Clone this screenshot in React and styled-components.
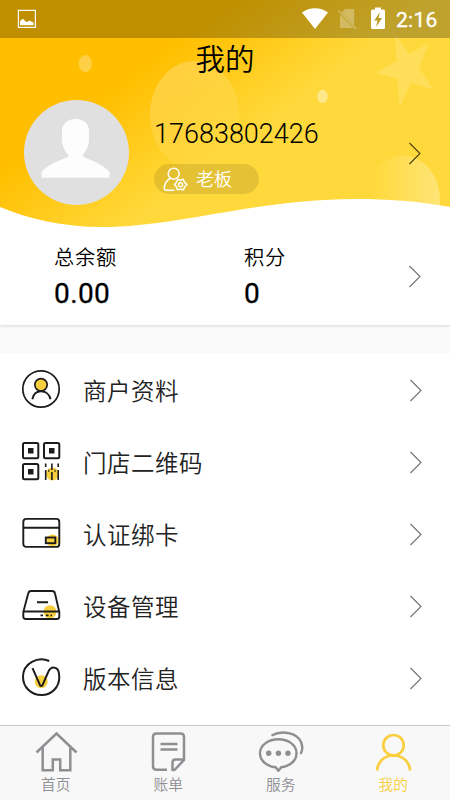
import React from 'react';
import styled, { createGlobalStyle } from 'styled-components';

const GlobalStyle = createGlobalStyle`
  * {
    box-sizing: border-box;
  }

  body {
    margin: 0;
    background: #fafafa;
    font-family: Roboto, 'Noto Sans CJK SC', sans-serif;
    font-weight: 350;
    color: #000;
  }
`;

const Page = styled.div`
  display: flex;
  flex-direction: column;
  width: 100%;
  height: 800px;
  overflow: hidden;
`;

const Header = styled.header`
  position: relative;
  z-index: 1;
  display: flex;
  flex-direction: column;
  height: 232px;
  background: #fff;
`;

/* Sits behind the status bar, title and profile */
const Backdrop = styled.svg`
  position: absolute;
  top: 0;
  left: 0;
`;

const StatusBar = styled.div`
  position: relative;
  display: flex;
  align-items: center;
  justify-content: space-between;
  height: 38px;
  padding: 0 12px 0 17px;
  background: rgba(0, 0, 0, 0.25);
`;

const StatusIcons = styled.div`
  display: flex;
  align-items: center;
`;

const Clock = styled.span`
  width: 42px;
  margin-left: 11px;
  padding-top: 2px;
  color: #fff;
  font-size: 21px;
  font-weight: 400;
  line-height: 24px;
  letter-spacing: 0.3px;
  white-space: nowrap;
  -webkit-text-stroke: 0.3px #fff;
`;

const Title = styled.h1`
  position: relative;
  margin: 0;
  height: 42px;
  padding-top: 2px;
  font-size: 29.5px;
  font-weight: 350;
  line-height: 41px;
  text-align: center;
`;

const Profile = styled.div`
  position: relative;
  display: flex;
  align-items: center;
  height: 105px;
  margin-top: 20px;
  padding: 0 29px 0 24px;
`;

const ProfileInfo = styled.div`
  display: flex;
  flex: 1;
  flex-direction: column;
  align-items: flex-start;
  gap: 14px;
  margin-left: 25px;
  padding-top: 7px;
`;

const Phone = styled.span`
  font-size: 27px;
  font-weight: 350;
  line-height: 32px;
`;

const Role = styled.div`
  display: flex;
  align-items: center;
  gap: 8px;
  width: 105px;
  height: 30px;
  padding: 2px 0 0 9px;
  border-radius: 15px;
  background: rgba(0, 0, 0, 0.1);
  color: #fff;
  font-size: 18px;
  font-weight: 350;
  line-height: 28px;
`;

const Stats = styled.section`
  position: relative;
  display: flex;
  align-items: center;
  height: 93px;
  padding: 0 29px 5px 54px;
  background: #fff;
  box-shadow: 0 1px 3px rgba(0, 0, 0, 0.14);
`;

const Stat = styled.div`
  flex: none;
  width: ${({ $width }) => $width}px;
  padding-top: 3px;
`;

const StatLabel = styled.div`
  font-size: 20.3px;
  line-height: 28px;
  letter-spacing: 0.7px;
`;

const StatValue = styled.div`
  margin-top: 5px;
  font-size: 28px;
  font-weight: 400;
  line-height: 34px;
  letter-spacing: 0.4px;
  -webkit-text-stroke: 0.3px #000;
`;

const ChevronIcon = styled.svg`
  flex: none;
  margin-left: auto;
  opacity: ${({ $strength }) => $strength || 0.55};
`;

const Menu = styled.nav`
  flex: 1;
  margin-top: 28px;
  background: #fff;
`;

const MenuItem = styled.div`
  display: flex;
  align-items: center;
  height: 72px;
  padding: 0 28px 0 21px;

  ${ChevronIcon} {
    margin-top: 2px;
  }
`;

const MenuLabel = styled.span`
  margin-left: 22px;
  padding-top: 5px;
  color: #222;
  font-size: 23.5px;
  line-height: 34px;
  letter-spacing: 0.5px;
`;

const TabBar = styled.footer`
  display: grid;
  grid-template-columns: repeat(4, 1fr);
  height: 75px;
  border-top: 1px solid #c8c8c8;
  background: #f8f8f8;
`;

const Tab = styled.div`
  display: flex;
  flex-direction: column;
  align-items: center;
  gap: 1px;
  padding: 4px 1px 0 0;
  color: ${({ $active }) => ($active ? '#f8cf3f' : '#8e8e93')};
  font-size: 14.7px;
  font-weight: 350;
  line-height: 20px;
`;

const Chevron = ({ strength }) => (
  <ChevronIcon $strength={strength} width="12" height="24" viewBox="0 0 12 24" fill="none" stroke="#000" strokeWidth="1.1">
    <path d="M.5 2 11 12.5.5 23" />
  </ChevronIcon>
);

const HeaderBackdrop = () => (
  <Backdrop width="450" height="230" viewBox="0 0 450 230">
    <defs>
      <linearGradient id="sun" gradientUnits="userSpaceOnUse" x1="84" y1="112" x2="156" y2="208">
        <stop offset="0" stopColor="#ffbf00" />
        <stop offset="1" stopColor="#ffd93c" />
      </linearGradient>
      <linearGradient id="balloon" x1="0.2" y1="0" x2="0.7" y2="1">
        <stop offset="0" stopColor="#fff" stopOpacity="0.24" />
        <stop offset="1" stopColor="#fff" stopOpacity="0" />
      </linearGradient>
      <linearGradient id="dome" x1="0" y1="0" x2="1" y2="0">
        <stop offset="0.1" stopColor="#fff" stopOpacity="0" />
        <stop offset="1" stopColor="#fff" stopOpacity="0.3" />
      </linearGradient>
      <clipPath id="wave">
        <path d="M0 0H450V207C418 201 388 199 355 199C258 199 176 227 103 227C62 227 29 219 0 207Z" />
      </clipPath>
    </defs>
    <g clipPath="url(#wave)">
      <rect width="450" height="230" fill="url(#sun)" />
      <ellipse cx="194.5" cy="115" rx="44.5" ry="54" fill="url(#balloon)" />
      <ellipse cx="403" cy="200" rx="37" ry="44.5" fill="url(#dome)" />
      <ellipse cx="85.3" cy="63.5" rx="6.6" ry="8.6" fill="#fff" fillOpacity="0.27" />
      <ellipse cx="322.5" cy="96.5" rx="5.3" ry="6.8" fill="#fff" fillOpacity="0.4" />
      <path
        d="M395 33.5 409 54 429 42.7 419 67.5 433 89 411 83 399.5 107.7 397.5 79 376 72.7 396.7 61Z"
        fill="#fff"
        fillOpacity="0.15"
      />
    </g>
  </Backdrop>
);

const PictureIcon = () => (
  <svg width="20" height="20" viewBox="0 0 20 20">
    <rect x="1.4" y="1.4" width="17" height="17" fill="none" stroke="#fff" strokeWidth="1.2" />
    <path d="M3 16.2V12L6 9.8 9.2 13 12.8 11.8 16.5 13.5V16.2Z" fill="#fff" />
  </svg>
);

const WifiIcon = () => (
  <svg width="26" height="24" viewBox="0 0 26 24">
    <path d="M0 5.6C7.6-.2 18.4-.2 26 5.6L13 22Z" fill="#fff" />
  </svg>
);

const NoSimIcon = () => (
  <svg width="20" height="24" viewBox="0 0 20 24" style={{ marginLeft: 9 }}>
    <path d="M4.500 5.500 8 2H17.200V18.500ZM3 7.500V21H16Z" fill="#fff" fillOpacity="0.3" />
    <path d="M1 3.200 19 22" stroke="#fff" strokeOpacity="0.3" strokeWidth="1.600" />
  </svg>
);

const BatteryIcon = () => (
  <svg width="14" height="24" viewBox="0 0 14 24" style={{ marginLeft: 14 }}>
    <path d="M0 4Q0 2.500 1.500 2.500H4V.5H10V2.500H12.500Q14 2.500 14 4V20.500Q14 22 12.500 22H1.500Q0 22 0 20.500Z" fill="#fff" />
    <path d="M9 5 3.200 13.500H6.500L5 20 11 11H7.500Z" fill="#b99b24" />
  </svg>
);

const Avatar = () => (
  <svg width="105" height="105" viewBox="0 0 105 105">
    <circle cx="52.500" cy="52.500" r="52.500" fill="#e0e0e0" />
    <path
      d="M51.500 19C60 19 65 24 65 31.500V40C65 46 61 53 58.500 55.500C60 59 77 61.500 85.500 72V77.800H17.500V72C26 61.500 43.500 59 45 55.500C41.500 53 38 46 38 40V31.500C38 24 43 19 51.500 19Z"
      fill="#fdfdfd"
    />
  </svg>
);

const UserCogIcon = () => (
  <svg width="25" height="26" viewBox="0 0 25 26" fill="none" stroke="#fff" strokeWidth="1.500" strokeLinecap="round" strokeLinejoin="round">
    <circle cx="10.700" cy="6.700" r="5.500" />
    <path d="M7.200 11.500C3.500 13.500 1.500 17 1.200 21Q1.200 23.300 3.200 23.300H10.800" />
    <path d="M14.700 12.300 17.500 13.300 20.300 12.300 21.500 15.200 24 17.500 21.800 19.800 20.500 22.700 17.500 22.200 14.500 22.700 13.300 19.800 11.500 17.500 13.500 15.200Z" />
    <circle cx="17.600" cy="17.700" r="2" />
  </svg>
);

const MerchantIcon = () => (
  <svg width="40" height="40" viewBox="0 0 40 40" fill="none" stroke="#1c1c1c">
    <circle cx="20" cy="20" r="18.200" strokeWidth="1.700" />
    <circle cx="20" cy="15.800" r="6.200" fill="#f8cf3f" strokeWidth="1.700" />
    <path d="M11.300 30.200C12.300 25.500 15.300 22.300 20 22.300S28.500 25.500 29.500 30.200" strokeWidth="1.900" />
  </svg>
);

const QrIcon = () => (
  <svg width="40" height="40" viewBox="0 0 40 40" fill="none" stroke="#1c1c1c" strokeWidth="2">
    <circle cx="31.500" cy="33" r="6.500" fill="#f8cf3f" stroke="none" />
    <rect x="2" y="2" width="15.300" height="15.300" rx="1.500" />
    <rect x="23" y="2" width="15.300" height="15.300" rx="1.500" />
    <rect x="2" y="23" width="15.300" height="15.300" rx="1.500" />
    <path d="M7 7H12.500V12.500H7ZM28 7H33.500V12.500H28ZM7 28H12.500V33.500H7Z" fill="#1c1c1c" stroke="none" />
    <path d="M24.700 22.500V26M24.700 29V39M30.900 22.500V29M30.900 31V39M37.200 22.500V26M37.200 29V39" strokeWidth="1.600" />
    <path d="M27.800 28.500V31M34 28.500V31" strokeWidth="1" />
  </svg>
);

const CardIcon = () => (
  <svg width="40" height="40" viewBox="0 0 40 40" fill="none" stroke="#1c1c1c" strokeWidth="1.900">
    <circle cx="31.500" cy="27.500" r="6" fill="#f8cf3f" stroke="none" />
    <rect x="2.300" y="5.900" width="36" height="28" rx="3" />
    <path d="M2.300 14.700H38.300" />
    <rect x="24.800" y="24.500" width="9.500" height="5.700" />
  </svg>
);

const DeviceIcon = () => (
  <svg width="40" height="40" viewBox="0 0 40 40" fill="none" stroke="#1c1c1c" strokeWidth="1.900">
    <circle cx="29" cy="26.800" r="6.500" fill="#f8cf3f" stroke="none" />
    <path d="M10 6H31Q33.500 6 34 8.500L38.300 27V31.500Q38.300 34 36 34H4.800Q2.300 34 2.300 31.500V27L7.200 8.500Q7.800 6 10 6Z" />
    <path d="M2.500 26.500H38.300" />
    <path d="M16 17.300H27M19.500 30.400H22M25 30.400H27.500M29.500 30.400H31" />
  </svg>
);

const VersionIcon = () => (
  <svg width="40" height="40" viewBox="0 0 40 40" fill="none" stroke="#1c1c1c" strokeWidth="2" strokeLinejoin="round">
    <circle cx="20.200" cy="24.700" r="6.500" fill="#f8cf3f" stroke="none" />
    <path d="M28.200 4C17 -1 2 6 2 20C2 30 10 38 20.500 38C31 38 38.300 30 38.300 20C38.300 14 36 10.600 32.500 10.600C29.500 10.600 28 13 27 15.500L21.500 28.200Q20.200 30 19 28.200L11.500 11.200" />
  </svg>
);

const HomeIcon = () => (
  <svg width="44" height="44" viewBox="0 0 44 44" fill="none" stroke="currentColor" strokeWidth="2.500">
    <path d="M2.500 22.500 22.500 3.500 42.500 22.500" />
    <path d="M8.700 17.500V40.300H18.800V29.500H26.200V40.300H36.300V17.500" />
  </svg>
);

const BillIcon = () => (
  <svg width="44" height="44" viewBox="0 0 44 44" fill="none" stroke="currentColor" strokeWidth="2.500" strokeLinejoin="round">
    <path d="M21 39.700H10.500Q7 39.700 7 36.200V7.100Q7 3.600 10.500 3.600H34.500Q38 3.600 38 7.100V30L28.500 40H26.500V32.500Q26.500 29.500 29.500 29.500H38" />
    <path d="M14.500 14H31.500M14.500 19.500H31.500" />
  </svg>
);

const ServiceIcon = () => (
  <svg width="46" height="44" viewBox="0 0 46 44" fill="none" stroke="currentColor" strokeWidth="2.400" strokeLinejoin="round">
    <path d="M20.300 9.300C30.300 9.300 38.500 14.800 38.500 23.300C38.500 30 33.700 34.500 26 36.800L23.200 37.300 20.400 40.800 17.700 37.300 14.200 36.800C7.200 34.500 2 30 2 23.300C2 14.800 10.800 9.300 20.300 9.300Z" />
    <path d="M13.500 5.500C24 0 39 2.500 43 12C45 17 44.500 21 42.500 24" />
    <g fill="currentColor" stroke="none">
      <circle cx="10.700" cy="23.300" r="2.700" />
      <circle cx="20.400" cy="23.300" r="2.700" />
      <circle cx="30" cy="23.300" r="2.700" />
    </g>
  </svg>
);

const MineIcon = () => (
  <svg width="44" height="44" viewBox="0 0 44 44" fill="none" stroke="currentColor" strokeWidth="2.700">
    <circle cx="22.500" cy="15.200" r="10.200" />
    <path d="M6 40.500C7 31 13.500 25.500 22.500 25.500S38.200 31 39.200 40.500" />
  </svg>
);

const menuItems = [
  { label: '商户资料', Icon: MerchantIcon },
  { label: '门店二维码', Icon: QrIcon },
  { label: '认证绑卡', Icon: CardIcon },
  { label: '设备管理', Icon: DeviceIcon },
  { label: '版本信息', Icon: VersionIcon },
];

const tabs = [
  { label: '首页', Icon: HomeIcon },
  { label: '账单', Icon: BillIcon },
  { label: '服务', Icon: ServiceIcon },
  { label: '我的', Icon: MineIcon, active: true },
];

const App = () => {
  return (
    <Page>
      <GlobalStyle />
      <Header>
        <HeaderBackdrop />
        <StatusBar>
          <PictureIcon />
          <StatusIcons>
            <WifiIcon />
            <NoSimIcon />
            <BatteryIcon />
            <Clock>2:16</Clock>
          </StatusIcons>
        </StatusBar>
        <Title>我的</Title>
        <Profile>
          <Avatar />
          <ProfileInfo>
            <Phone>17683802426</Phone>
            <Role>
              <UserCogIcon />
              老板
            </Role>
          </ProfileInfo>
          <Chevron strength={0.7} />
        </Profile>
      </Header>
      <Stats>
        <Stat $width={190}>
          <StatLabel>总余额</StatLabel>
          <StatValue>0.00</StatValue>
        </Stat>
        <Stat $width={100}>
          <StatLabel>积分</StatLabel>
          <StatValue>0</StatValue>
        </Stat>
        <Chevron />
      </Stats>
      <Menu>
        {menuItems.map(({ label, Icon }) => (
          <MenuItem key={label}>
            <Icon />
            <MenuLabel>{label}</MenuLabel>
            <Chevron />
          </MenuItem>
        ))}
      </Menu>
      <TabBar>
        {tabs.map(({ label, Icon, active }) => (
          <Tab key={label} $active={active}>
            <Icon />
            <span>{label}</span>
          </Tab>
        ))}
      </TabBar>
    </Page>
  );
};

export default App;
